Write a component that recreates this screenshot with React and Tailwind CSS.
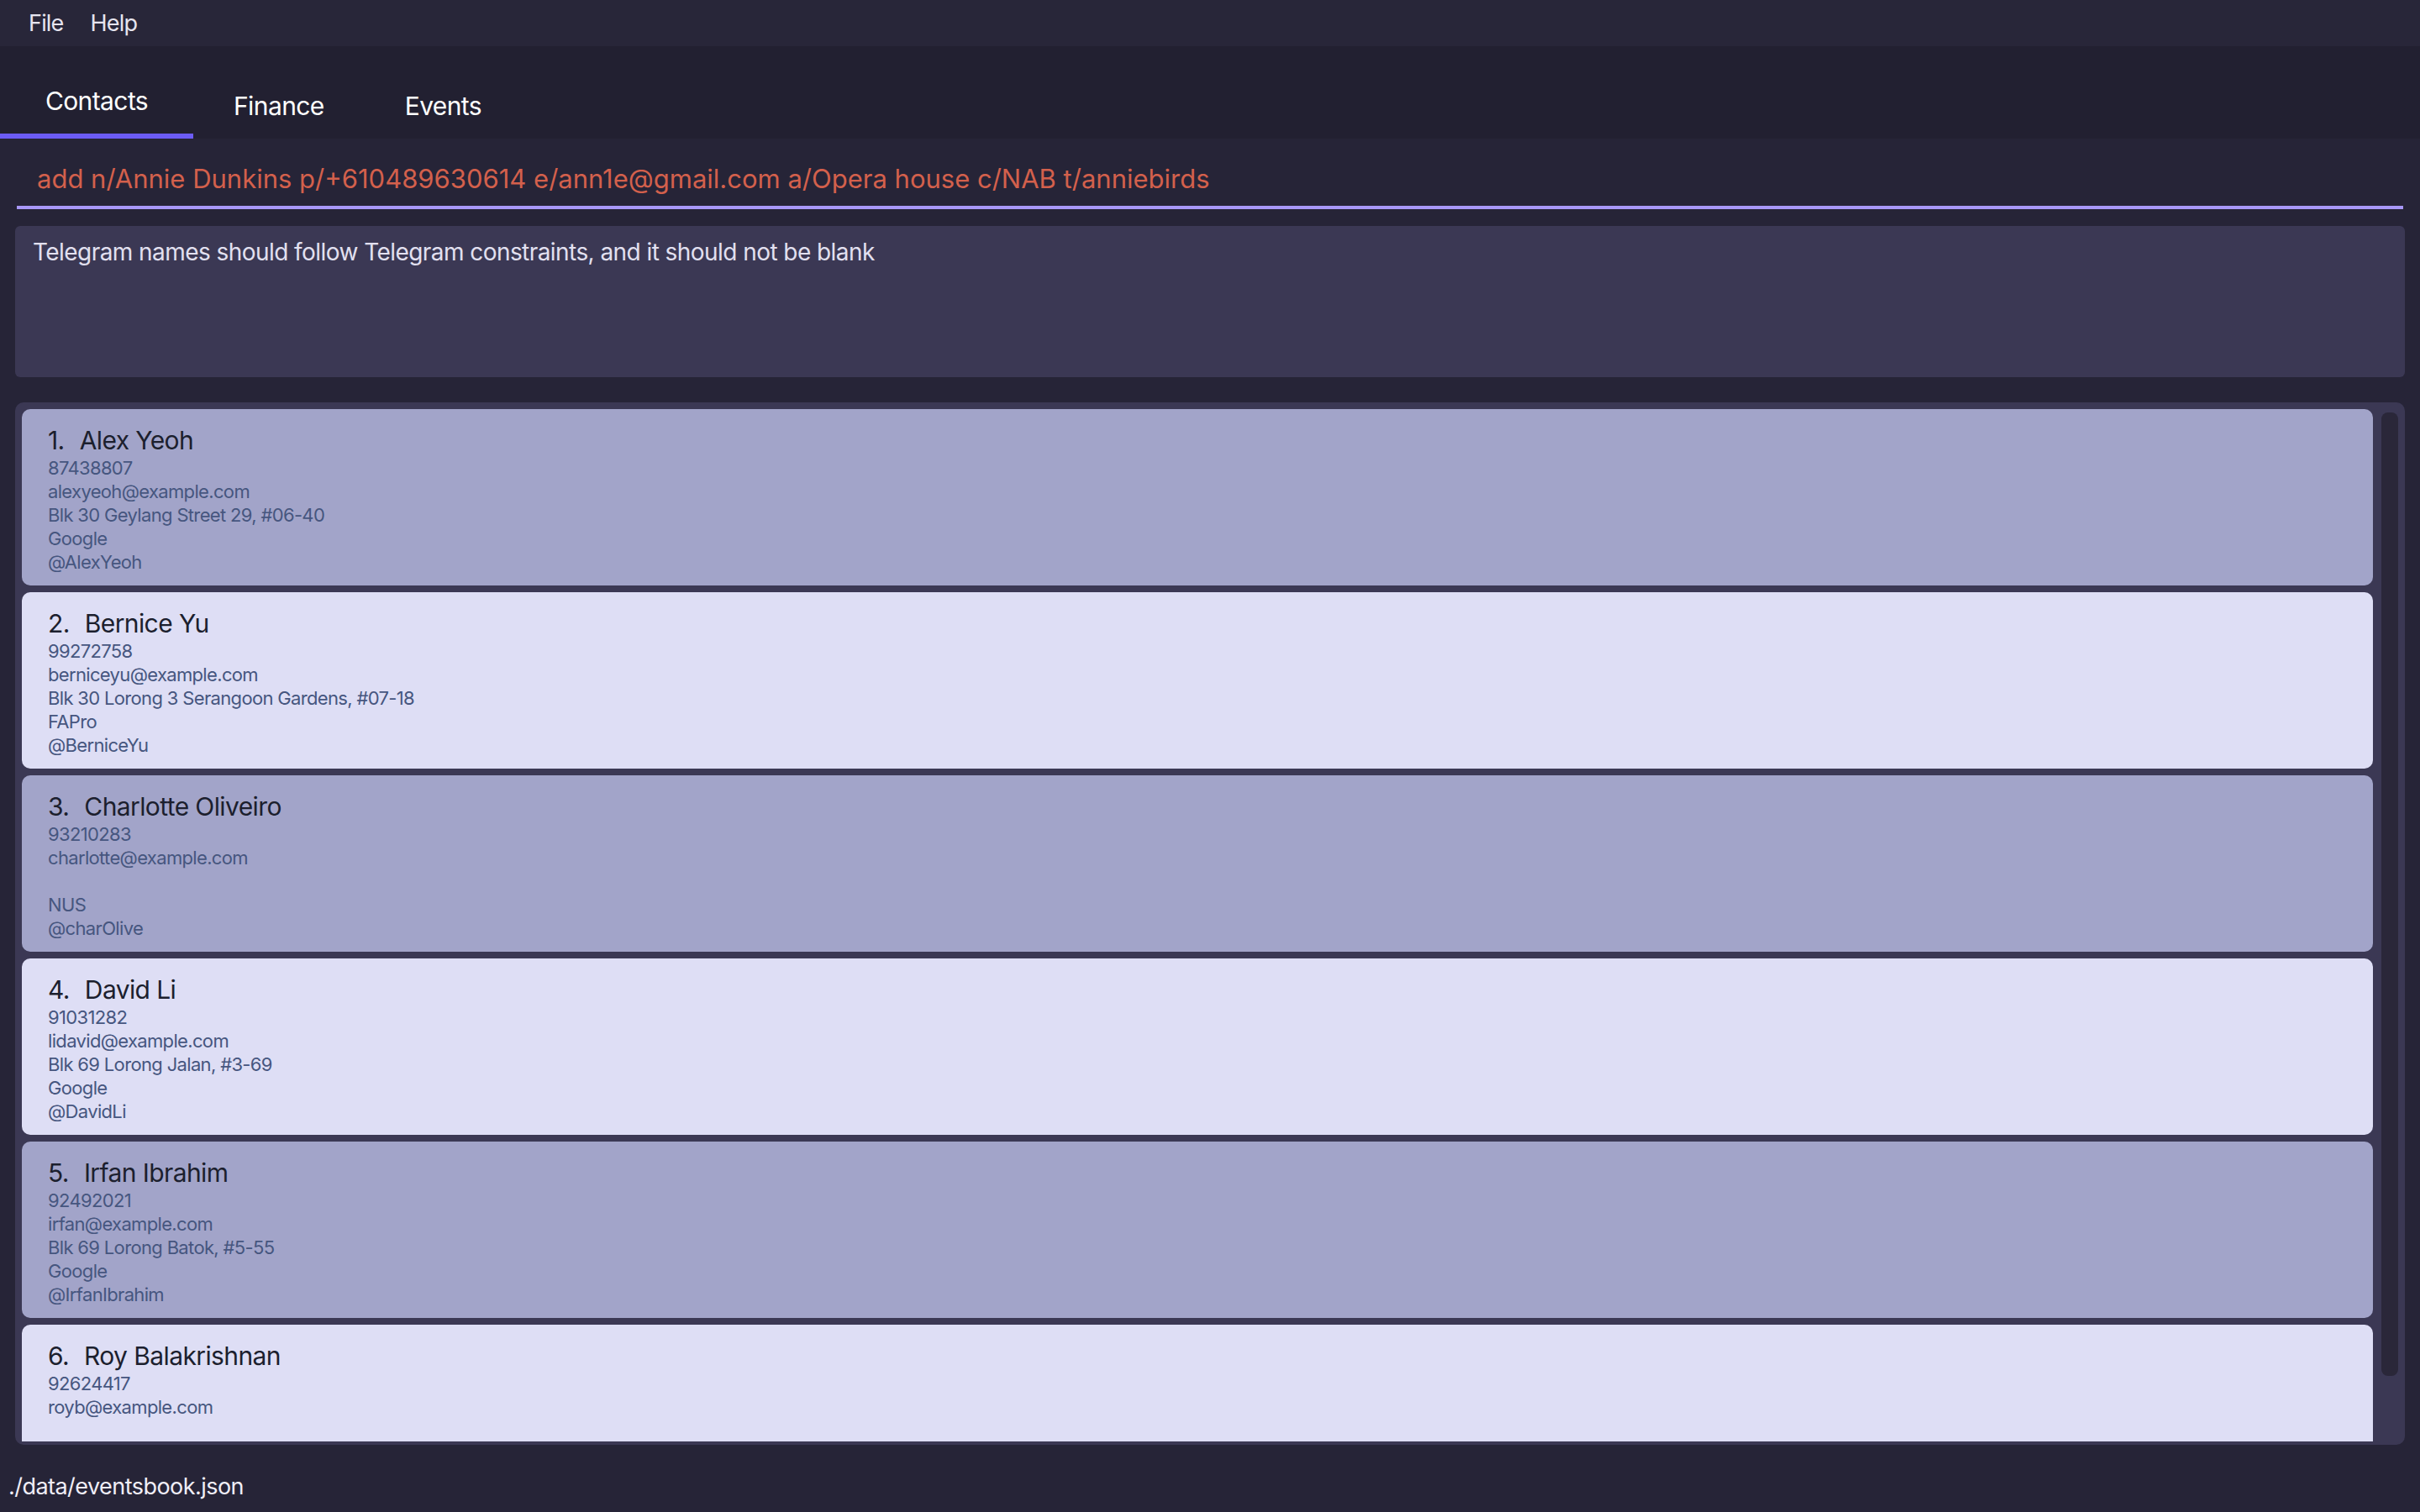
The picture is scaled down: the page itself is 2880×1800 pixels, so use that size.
import { useState } from 'react';

const contacts = [
  { name: 'Alex Yeoh', phone: '87438807', email: 'alexyeoh@example.com', address: 'Blk 30 Geylang Street 29, #06-40', company: 'Google', telegram: '@AlexYeoh' },
  { name: 'Bernice Yu', phone: '99272758', email: 'berniceyu@example.com', address: 'Blk 30 Lorong 3 Serangoon Gardens, #07-18', company: 'FAPro', telegram: '@BerniceYu' },
  { name: 'Charlotte Oliveiro', phone: '93210283', email: 'charlotte@example.com', address: '', company: 'NUS', telegram: '@charOlive' },
  { name: 'David Li', phone: '91031282', email: 'lidavid@example.com', address: 'Blk 69 Lorong Jalan, #3-69', company: 'Google', telegram: '@DavidLi' },
  { name: 'Irfan Ibrahim', phone: '92492021', email: 'irfan@example.com', address: 'Blk 69 Lorong Batok, #5-55', company: 'Google', telegram: '@IrfanIbrahim' },
  { name: 'Roy Balakrishnan', phone: '92624417', email: 'royb@example.com', address: '', company: '', telegram: '' },
];

const tabs = ['Contacts', 'Finance', 'Events'];

function ContactCard({ contact, index }) {
  const odd = index % 2 === 0;
  return (
    <div className={"mx-1 mb-2 rounded-[10px] px-[31px] pt-[18px] pb-[14px] " + (odd ? 'bg-[#a2a4c9]' : 'bg-[#dedef5]')}>
      <div className="flex h-[38px] items-center text-[30px] tracking-[-0.02em] text-[#1c1f2e]">
        <span>{index + 1}.</span>
        <span className="ml-[18px]">{contact.name}</span>
      </div>
      <div className="text-[22px] leading-[28px] tracking-[-0.03em] text-[#46567f]">
        <div className="h-[28px]">{contact.phone}</div>
        <div className="h-[28px]">{contact.email}</div>
        <div className="h-[28px]">{contact.address}</div>
        <div className="h-[28px]">{contact.company}</div>
        <div className="h-[28px]">{contact.telegram}</div>
      </div>
    </div>
  );
}

export default function App() {
  const [active, setActive] = useState(0);

  return (
    <div className="flex h-[1800px] w-[2880px] flex-col overflow-hidden bg-[#262437] font-['Inter',sans-serif]">
      {/* Menu bar */}
      <div className="flex h-[55px] items-center gap-[32px] bg-[#282639] pl-[34px] pt-[2px] text-[27px] tracking-[-0.03em] text-[#e6e4ef]">
        <span>File</span>
        <span>Help</span>
      </div>

      {/* Tabs */}
      <div className="flex h-[110px] items-end bg-[#222031]">
        {tabs.map((t, i) => (
          <button
            key={t}
            onClick={() => setActive(i)}
            className={"flex h-full flex-col items-center justify-end text-[30px] tracking-[-0.02em] text-white " + (i === 0 ? 'w-[230px]' : 'px-[48px]')}
          >
            <span className={i === active ? 'mb-[16px]' : 'mb-[10px]'}>{t}</span>
            <span className={"h-[6px] w-full " + (i === active ? 'bg-[#6c5cf5]' : 'bg-transparent')} />
          </button>
        ))}
      </div>

      {/* Command box */}
      <div className="px-[20px] pt-[28px]">
        <div className="border-b-4 border-[#a897f8] pb-[12px] pl-[24px] text-[31px] leading-[40px] text-[#d3604c]">
          add n/Annie Dunkins p/+610489630614 e/ann1e@gmail.com a/Opera house c/NAB t/anniebirds
        </div>
      </div>

      {/* Result display */}
      <div className="mx-[18px] mt-[20px] h-[180px] rounded-[6px] bg-[#3b3854] px-[21px] pt-[13px] text-[28px] leading-[36px] tracking-[-0.02em] text-[#e2e0f0]">
        Telegram names should follow Telegram constraints, and it should not be blank
      </div>

      {/* Contact list */}
      <div className="mx-[18px] mt-[30px] flex h-[1241px] rounded-[10px] bg-[#3b3854] p-1">
        <div className="flex-1 overflow-hidden pt-1">
          {contacts.map((c, i) => (
            <ContactCard key={c.name} contact={c} index={i} />
          ))}
        </div>
        <div className="ml-[6px] mr-[4px] w-[20px] pt-[8px]">
          <div className="h-[1147px] rounded-[8px] bg-[#2a2739]" />
        </div>
      </div>

      {/* Status bar */}
      <div className="flex flex-1 items-center pl-[10px] pt-[20px] text-[27px] tracking-[-0.02em] text-[#f0eef7]">
        ./data/eventsbook.json
      </div>
    </div>
  );
}
